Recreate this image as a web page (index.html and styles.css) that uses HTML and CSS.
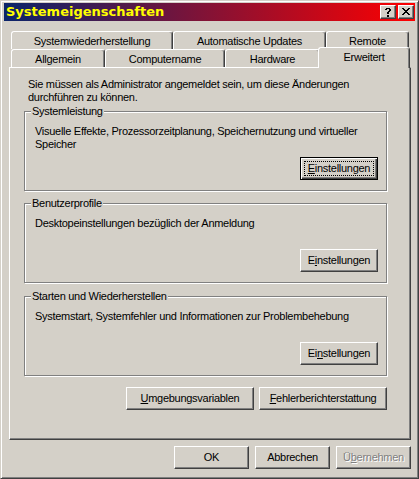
FILE: index.html
```html
<!DOCTYPE html>
<html lang="de">
<head>
<meta charset="utf-8">
<title>Systemeigenschaften</title>
<link rel="stylesheet" href="styles.css">
</head>
<body>
<div class="window">
  <div class="titlebar">
    <span class="title">Systemeigenschaften</span>
    <div class="caption-buttons">
      <button class="cap-btn" aria-label="Hilfe">
        <svg width="6" height="9" viewBox="0 0 6 9" shape-rendering="crispEdges"><path d="M1 0h4v1h-4z M0 1h2v1h-2z M4 1h2v1h-2z M4 2h2v1h-2z M3 3h2v1h-2z M2 4h2v2h-2z M2 7h2v2h-2z" fill="#000"/></svg>
      </button>
      <button class="cap-btn cap-close" aria-label="Schließen">
        <svg width="8" height="7" viewBox="0 0 8 7" shape-rendering="crispEdges"><path d="M0 0h2v1h-2z M6 0h2v1h-2z M1 1h2v1h-2z M5 1h2v1h-2z M2 2h4v1h-4z M3 3h2v1h-2z M2 4h4v1h-4z M1 5h2v1h-2z M5 5h2v1h-2z M0 6h2v1h-2z M6 6h2v1h-2z" fill="#000"/></svg>
      </button>
    </div>
  </div>

  <div class="tabs">
    <div class="tab-row">
      <div class="tab t-restore">Systemwiederherstellung</div>
      <div class="tab t-updates">Automatische Updates</div>
      <div class="tab t-remote">Remote</div>
    </div>
    <div class="tab-row">
      <div class="tab t-general">Allgemein</div>
      <div class="tab t-computer">Computername</div>
      <div class="tab t-hardware">Hardware</div>
      <div class="tab t-advanced active">Erweitert</div>
    </div>
  </div>

  <div class="panel">
    <p class="intro">Sie müssen als Administrator angemeldet sein, um diese Änderungen<br>durchführen zu können.</p>

    <fieldset class="group g1">
      <legend>Systemleistung</legend>
      <div class="group-body">
        <p class="desc">Visuelle Effekte, Prozessorzeitplanung, Speichernutzung und virtueller<br>Speicher</p>
        <div class="btn-row">
          <button class="btn btn-set default"><span class="focus"></span><u>E</u>instellungen</button>
        </div>
      </div>
    </fieldset>

    <fieldset class="group g2">
      <legend>Benutzerprofile</legend>
      <div class="group-body">
        <p class="desc">Desktopeinstellungen bezüglich der Anmeldung</p>
        <div class="btn-row">
          <button class="btn btn-set">E<u>i</u>nstellungen</button>
        </div>
      </div>
    </fieldset>

    <fieldset class="group g3">
      <legend>Starten und Wiederherstellen</legend>
      <div class="group-body">
        <p class="desc">Systemstart, Systemfehler und Informationen zur Problembehebung</p>
        <div class="btn-row">
          <button class="btn btn-set">Ei<u>n</u>stellungen</button>
        </div>
      </div>
    </fieldset>

    <div class="panel-buttons">
      <button class="btn btn-wide"><u>U</u>mgebungsvariablen</button>
      <button class="btn btn-wide"><u>F</u>ehlerberichterstattung</button>
    </div>
  </div>

  <div class="dialog-buttons">
    <button class="btn btn-dlg">OK</button>
    <button class="btn btn-dlg">Abbrechen</button>
    <button class="btn btn-dlg" disabled>Ü<u>b</u>ernehmen</button>
  </div>
</div>
</body>
</html>
```

FILE: styles.css
```css
* { box-sizing: border-box; }

html, body {
  margin: 0;
  padding: 0;
}

body {
  background: #d4d0c8;
  font-family: "Liberation Sans", Arial, sans-serif;
  font-size: 11px;
  line-height: 13px;
  letter-spacing: -0.28px;
  color: #000;
}

.window {
  width: 419px;
  height: 479px;
  background: #d4d0c8;
  border: 1px solid;
  border-color: #d4d0c8 #404040 #404040 #d4d0c8;
  box-shadow: inset 1px 1px #fff, inset -1px -1px #808080;
  padding: 2px 3px 3px 3px;
  display: flex;
  flex-direction: column;
}

/* ---------- title bar ---------- */
.titlebar {
  height: 18px;
  flex: none;
  display: flex;
  align-items: center;
  padding: 0 1px 0 2px;
  background: linear-gradient(to right, #0a246a, #ff0000);
}

.title {
  flex: 1;
  font-family: "DejaVu Sans", Verdana, sans-serif;
  font-weight: bold;
  font-size: 13px;
  line-height: 18px;
  letter-spacing: 0;
  color: #ffff00;
  white-space: nowrap;
}

.caption-buttons {
  display: flex;
  gap: 2px;
}

.cap-btn {
  width: 16px;
  height: 14px;
  padding: 0;
  margin: 0;
  background: #d4d0c8;
  border: 1px solid;
  border-color: #fff #404040 #404040 #fff;
  box-shadow: inset -1px -1px #808080;
  display: flex;
  align-items: center;
  justify-content: center;
}

.cap-btn svg { display: block; }
.cap-close { padding-bottom: 1px; }

/* ---------- tabs ---------- */
.tabs {
  margin: 10px 0 0 7px;
  flex: none;
}

.tab-row {
  display: flex;
  height: 18px;
}

.tab {
  height: 18px;
  flex: none;
  background: #d4d0c8;
  border: 1px solid;
  border-bottom: 0;
  border-color: #fff #404040 transparent #fff;
  border-radius: 3px 3px 0 0;
  box-shadow: inset -1px 0 #808080;
  padding-top: 3px;
  text-align: center;
  white-space: nowrap;
}

.t-restore { width: 162px; }
.t-updates { width: 153px; }
.t-remote { width: 83px; }
.t-general { width: 94px; }
.t-computer { width: 120px; }
.t-hardware { width: 95px; }
.t-advanced { width: 88px; }

.tab.active {
  height: 21px;
  width: 92px;
  margin: -2px -2px 0 -2px;
  position: relative;
  z-index: 1;
}

/* ---------- panel ---------- */
.panel {
  flex: none;
  margin-left: 5px;
  width: 402px;
  height: 373px;
  border: 1px solid;
  border-color: #fff #404040 #404040 #fff;
  box-shadow: inset -1px -1px #808080;
  padding: 10px 23px 0 14px;
  display: flex;
  flex-direction: column;
}

.intro {
  margin: 0 0 1px 0;
  padding-left: 4px;
  white-space: nowrap;
}

.group {
  margin: 6px 0 0 0;
  padding: 0;
  min-width: 0;
  border: 1px solid #808080;
  box-shadow: inset 1px 1px #fff, 1px 1px #fff;
}

.g1 { margin-top: 0; }
.g3 { margin-top: 7px; }

.group legend {
  margin-left: 6px;
  padding: 0 1px;
  line-height: 13px;
  background: #d4d0c8;
}

.group-body {
  padding: 7px 8px 10px 10px;
}

.desc {
  margin: 0;
  min-height: 26px;
  white-space: nowrap;
}

.btn-row {
  display: flex;
  justify-content: flex-end;
  margin-top: 6px;
}

/* ---------- buttons ---------- */
.btn {
  position: relative;
  height: 23px;
  padding: 0;
  margin: 0;
  font: inherit;
  line-height: 13px;
  letter-spacing: inherit;
  color: #000;
  background: #d4d0c8;
  border: 1px solid;
  border-color: #fff #404040 #404040 #fff;
  box-shadow: inset -1px -1px #808080;
  white-space: nowrap;
}

.btn u { text-underline-offset: 1px; }

.btn.default {
  border-color: #000;
  box-shadow: inset 1px 1px #fff, inset -1px -1px #404040, inset -2px -2px #808080;
}

.focus {
  position: absolute;
  left: 3px;
  top: 3px;
  right: 3px;
  bottom: 3px;
  border: 1px dotted #000;
}

.btn:disabled {
  color: #808080;
  text-shadow: 1px 1px #fff;
}

.btn-set { width: 78px; }
.btn-wide { width: 128px; }
.btn-dlg { width: 75px; }

.panel-buttons {
  display: flex;
  justify-content: flex-end;
  gap: 5px;
  margin-top: 11px;
}

.dialog-buttons {
  flex: none;
  display: flex;
  justify-content: flex-end;
  gap: 6px;
  margin: 6px 4px 0 0;
}
```
